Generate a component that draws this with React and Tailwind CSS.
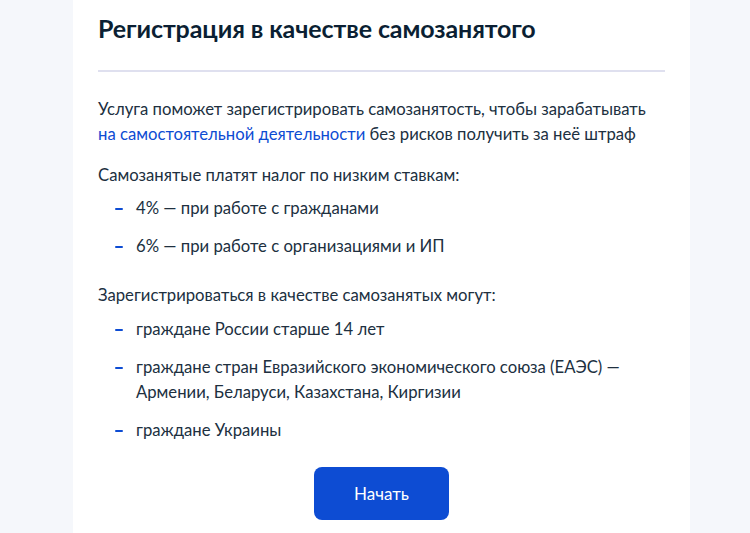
import React from 'react';

const Dash = () => (
  <span className="mt-[12px] w-[8px] h-[2px] bg-[#0d4cd3] shrink-0 rounded-sm" />
);

const Item = ({ children }) => (
  <li className="flex gap-[13px] pl-[17px]">
    <Dash />
    <span>{children}</span>
  </li>
);

export default function App() {
  return (
    <div
      className="w-[750px] h-[533px] overflow-hidden bg-[#f5f7fb] flex pl-[73px]"
      style={{ fontFamily: 'Lato, "Noto Sans", sans-serif' }}
    >
      <div className="w-[617px] bg-white px-[25px] pt-[12px] text-[#0b1f33]">
        <h1 className="text-[25px] leading-[32px] font-bold tracking-[-0.1px] whitespace-nowrap">
          Регистрация в качестве самозанятого
        </h1>
        <div className="mt-[26px] h-[2px] bg-[#dfe0ef]" />

        <div className="mt-[25px] text-[16.7px] leading-[25px] text-[#20303f]">
          <p className="whitespace-nowrap">
            Услуга поможет зарегистрировать самозанятость, чтобы зарабатывать
            <br />
            <a className="text-[#0d4cd3]">на самостоятельной деятельности</a> без рисков получить за неё штраф
          </p>

          <p className="mt-[16px]">Самозанятые платят налог по низким ставкам:</p>
          <ul className="mt-[8px] flex flex-col gap-[13px]">
            <Item>4% — при работе с гражданами</Item>
            <Item>6% — при работе с организациями и ИП</Item>
          </ul>

          <p className="mt-[24px]">Зарегистрироваться в качестве самозанятых могут:</p>
          <ul className="mt-[9px] flex flex-col gap-[13px]">
            <Item>граждане России старше 14 лет</Item>
            <Item>
              граждане стран Евразийского экономического союза (ЕАЭС) —
              <br />
              Армении, Беларуси, Казахстана, Киргизии
            </Item>
            <Item>граждане Украины</Item>
          </ul>

          <div className="mt-[24px] flex justify-center">
            <button className="w-[135px] h-[53px] rounded-[8px] bg-[#0d4cd3] text-white text-[17px]">
              Начать
            </button>
          </div>
        </div>
      </div>
    </div>
  );
}
